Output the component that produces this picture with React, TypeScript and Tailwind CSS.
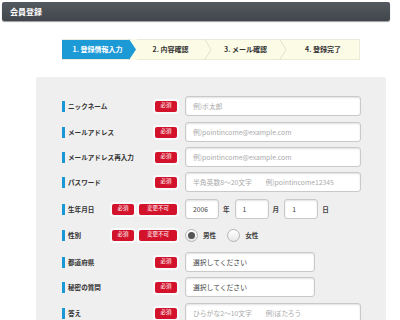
import React from 'react'

const font = { fontFamily: '"Noto Sans CJK JP", "Noto Sans", sans-serif' }

function Badge({ text, w }: { text: string; w: string }) {
  return (
    <span
      className={`${w} h-[11px] flex items-center justify-center rounded-[2px] bg-[#d3132c] text-white text-[5.5px] leading-none shadow-[0_0_0_2px_#f8fbfb]`}
    >
      {text}
    </span>
  )
}

function Label({ text }: { text: string }) {
  return (
    <div className="flex items-center gap-[3px]">
      <span className="w-[3px] h-[11px] bg-[#1a98d5]" />
      <span className="text-[6.6px] font-bold text-[#333] leading-none">{text}</span>
    </div>
  )
}

function TextBox({ placeholder, value, w = 'w-[176px]' }: { placeholder?: string; value?: string; w?: string }) {
  return (
    <div
      className={`${w} h-[20px] flex items-center px-[7px] bg-white border border-[#c9c9c9] rounded-[3px] shadow-[inset_0_1px_2px_rgba(0,0,0,0.12)] text-[6.8px] font-normal whitespace-pre leading-none ${value ? 'text-[#444]' : 'text-[#aaa]'}`}
    >
      {value ?? placeholder}
    </div>
  )
}

function Row({
  label,
  badges,
  children,
  mt,
}: {
  label: string
  badges: React.ReactNode
  children: React.ReactNode
  mt: string
}) {
  return (
    <div className={`flex items-center h-[20px] ${mt}`}>
      <div className="w-[115px] flex items-center justify-between">
        <Label text={label} />
        <div className="flex items-center gap-[5px]">{badges}</div>
      </div>
      <div className="ml-[8px] flex items-center">{children}</div>
    </div>
  )
}

function Radio({ checked, text }: { checked?: boolean; text: string }) {
  return (
    <div className="flex items-center gap-[5px]">
      <span className="w-[13px] h-[13px] rounded-full border border-[#b5b5b5] bg-gradient-to-b from-white to-[#e8e8e8] flex items-center justify-center">
        {checked && <span className="w-[7px] h-[7px] rounded-full bg-[#555]" />}
      </span>
      <span className="text-[6.6px] font-bold text-[#444] leading-none">{text}</span>
    </div>
  )
}

function Chevron({ fill }: { fill?: boolean }) {
  return fill ? (
    <svg width="8" height="21" viewBox="0 0 8 21" className="shrink-0">
      <rect width="8" height="21" fill="#fcfbe6" />
      <polygon points="0,0 7,10.5 0,21" fill="#1c9ad6" />
    </svg>
  ) : (
    <svg width="8" height="21" viewBox="0 0 8 21" className="shrink-0">
      <polyline points="0.5,0 7,10.5 0.5,21" fill="none" stroke="#e2e1cc" strokeWidth="1" />
    </svg>
  )
}

export default function App() {
  const req = <Badge text="必須" w="w-[22px]" />
  const fixed = <Badge text="変更不可" w="w-[38px]" />
  return (
    <div className="w-[400px] h-[320px] overflow-hidden bg-white" style={font}>
      <div className="pt-[2px] px-[2px] pr-[10px]">
        <div className="h-[19px] rounded-[2px] bg-gradient-to-b from-[#555a61] to-[#41464c] shadow-[0_1px_1px_rgba(0,0,0,0.4)] flex items-center px-[8px]">
          <span className="text-white text-[8px] font-bold leading-none">会員登録</span>
        </div>
      </div>

      <div className="mt-[18px] ml-[62px] w-[298px] h-[21px] flex items-center bg-[#fcfbe6] border-y border-[#ebeadb] border-r text-[7px] font-bold leading-none">
        <div className="w-[67px] h-full bg-[#1c9ad6] text-white flex items-center justify-center pl-[4px]">1. 登録情報入力</div>
        <Chevron fill />
        <div className="w-[67px] h-full text-[#333] flex items-center justify-center">2. 内容確認</div>
        <Chevron />
        <div className="w-[67px] h-full text-[#333] flex items-center justify-center">3. メール確認</div>
        <Chevron />
        <div className="flex-1 h-full text-[#333] flex items-center justify-center">4. 登録完了</div>
      </div>

      <div className="mt-[17px] ml-[36px] w-[350px] h-[260px] bg-[#efefef] rounded-t-[2px] pl-[26px] pt-[19px]">
        <Row label="ニックネーム" badges={req} mt="mt-0">
          <TextBox placeholder="例)ポ太郎" />
        </Row>
        <Row label="メールアドレス" badges={req} mt="mt-[6px]">
          <TextBox placeholder="例)pointincome@example.com" />
        </Row>
        <Row label="メールアドレス再入力" badges={req} mt="mt-[5px]">
          <TextBox placeholder="例)pointincome@example.com" />
        </Row>
        <Row label="パスワード" badges={req} mt="mt-[5px]">
          <TextBox placeholder={'半角英数8～20文字　　例)pointincome12345'} />
        </Row>
        <Row label="生年月日" badges={<>{req}{fixed}</>} mt="mt-[7px]">
          <div className="flex items-center text-[6.6px] font-bold text-[#444] leading-none">
            <TextBox value="2006" w="w-[34px]" />
            <span className="ml-[4px] mr-[5px]">年</span>
            <TextBox value="1" w="w-[34px]" />
            <span className="ml-[4px] mr-[5px]">月</span>
            <TextBox value="1" w="w-[34px]" />
            <span className="ml-[4px]">日</span>
          </div>
        </Row>
        <Row label="性別" badges={<>{req}{fixed}</>} mt="mt-[6px]">
          <div className="flex items-center gap-[11px]">
            <Radio checked text="男性" />
            <Radio text="女性" />
          </div>
        </Row>
        <Row label="都道府県" badges={req} mt="mt-[7px]">
          <TextBox value="選択してください" w="w-[130px]" />
        </Row>
        <Row label="秘密の質問" badges={req} mt="mt-[5px]">
          <TextBox value="選択してください" w="w-[130px]" />
        </Row>
        <Row label="答え" badges={req} mt="mt-[6px]">
          <TextBox placeholder={'ひらがな2～10文字　　例)ぽたろう'} />
        </Row>
      </div>
    </div>
  )
}
